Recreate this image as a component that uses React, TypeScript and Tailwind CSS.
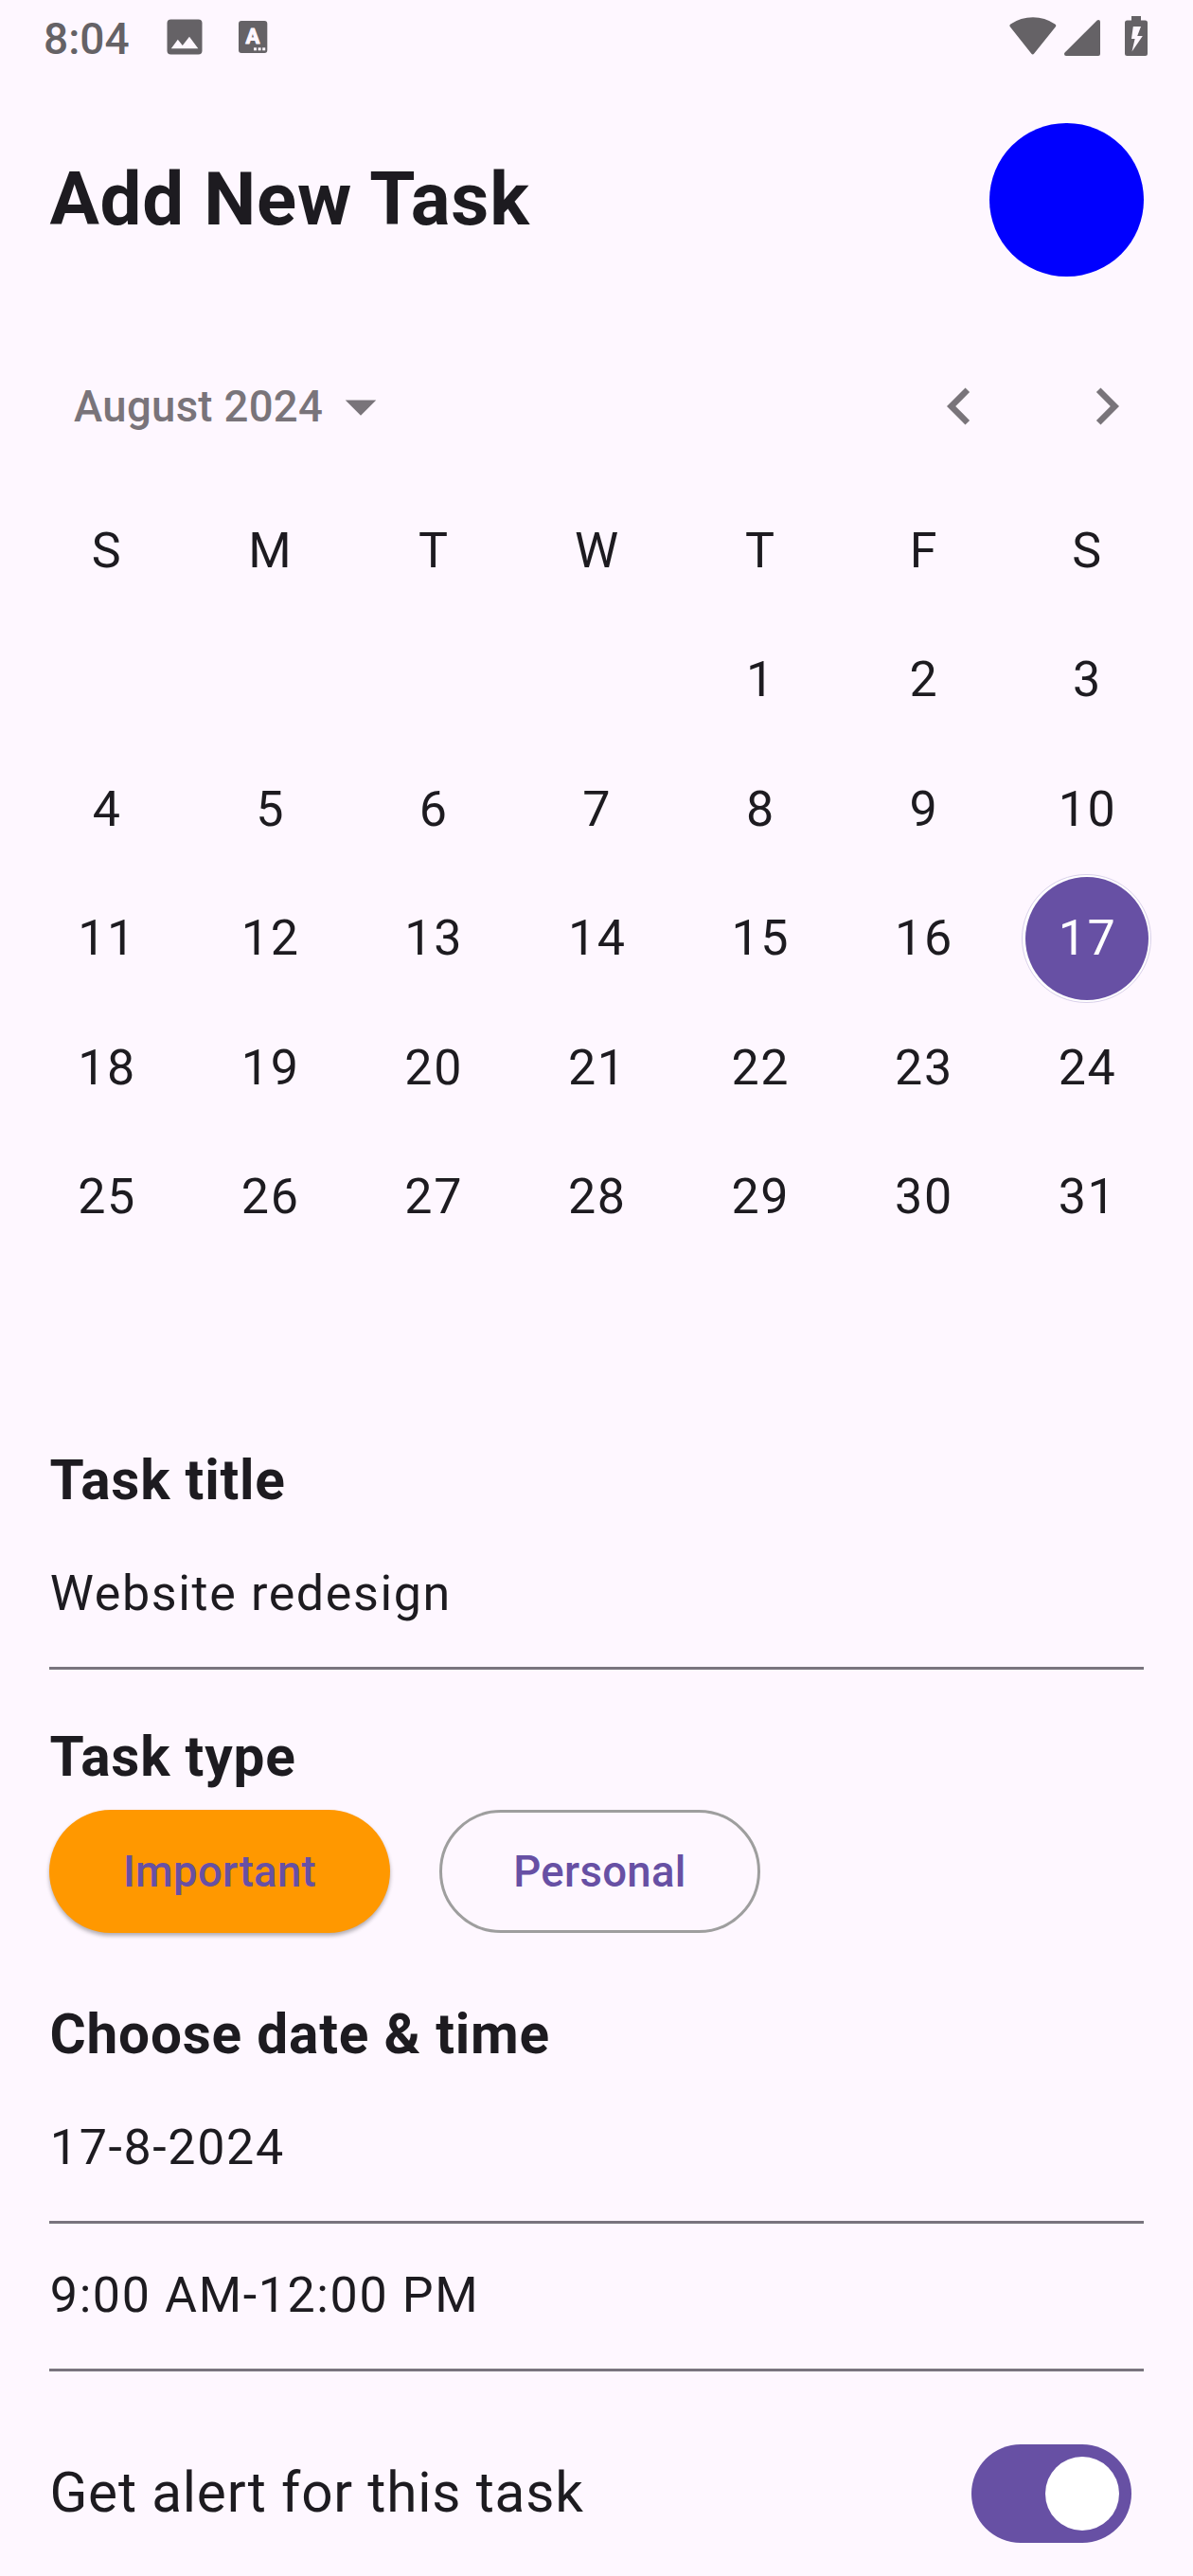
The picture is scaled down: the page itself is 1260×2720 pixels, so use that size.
const weekdays = ['S', 'M', 'T', 'W', 'T', 'F', 'S'];
const leadingBlanks = 4;
const days = Array.from({ length: 31 }, (_, i) => i + 1);
const selectedDay = 17;

function StatusBar() {
  return (
    <div className="flex h-[78px] items-start justify-between pl-[46px] pr-[47px] text-[#656266]">
      <div className="flex items-start">
        <span className="mt-[14px] w-[130px] text-[46px] font-medium leading-[54px]">8:04</span>
        <svg className="mt-5 h-[38px] w-[38px]" viewBox="0 0 38 38">
          <rect x="0.5" y="0.5" width="37" height="37" rx="4" fill="currentColor" />
          <path d="M4.8 31.2L11.8 21.8L16.8 28L24 18.8L33.3 31.2Z" fill="#fef7ff" />
        </svg>
        <svg className="ml-[37px] mt-5 h-[38px] w-[34px]" viewBox="0 0 34 38">
          <rect x="1" y="2" width="30.3" height="34" rx="3" fill="currentColor" />
          <text x="16" y="26.2" textAnchor="middle" fontSize="22" fontWeight="700" fill="#fef7ff" stroke="#fef7ff" strokeWidth="1" strokeLinejoin="round">A</text>
          <rect x="17" y="30.3" width="3" height="3" fill="#fef7ff" />
          <rect x="21.6" y="30.3" width="3" height="3" fill="#fef7ff" />
          <rect x="26.2" y="30.3" width="3" height="3" fill="#fef7ff" />
        </svg>
      </div>
      <div className="flex items-start">
        <svg className="mt-4 h-11 w-[50px]" viewBox="0 0 50 44" fill="currentColor">
          <path d="M1 12.4Q-0.4 10.7 1.3 9.4Q12 2.2 25 2.2Q37.500 2.200 48.300 9.400Q50.100 10.700 48.700 12.400L26.200 40.600Q24.700 42.400 23.200 40.600Z" />
        </svg>
        <svg className="ml-2 mt-5 h-10 w-[39px]" viewBox="0 0 39 40" fill="currentColor">
          <path d="M38 3V37Q38 39 36 39H2Q0 39 0 37Q0 36.200 0.600 35.600L34.700 1.500Q35.300 1 36.200 1Q38 1 38 3Z" />
        </svg>
        <svg className="ml-[25px] mt-4 h-11 w-[25px]" viewBox="0 0 25 44">
          <path d="M7 1H17V5.500H21.500Q24 5.500 24 8V40.500Q24 43 21.500 43H2.500Q0 43 0 40.500V8Q0 5.500 2.500 5.500H7Z" fill="currentColor" />
          <path d="M8.800 12H17L13.200 22H18.800L7.500 38.500L10.600 25H7Z" fill="#fef7ff" />
        </svg>
      </div>
    </div>
  );
}

function Header() {
  return (
    <header className="mt-[52px] flex h-[162px] items-center justify-between px-[52px]">
      <h1 className="pl-[0.4px] text-[78px] font-bold leading-[92px] tracking-[0.8125px]">Add New Task</h1>
      <div className="h-[162px] w-[163px] rounded-full bg-[#0000ff]" />
    </header>
  );
}

function Calendar() {
  return (
    <section>
      <div className="mt-[52px] flex h-[169px] items-center justify-between pl-[78px] pr-[52.5px] text-[#79747a]">
        <div className="flex items-center">
          <span className="w-[263.5px] whitespace-nowrap pt-px text-[45.5px] font-medium leading-[65px] tracking-[0.325px]">August 2024</span>
          <svg className="h-[78px] w-[78px]" viewBox="0 0 24 24" fill="currentColor">
            <path d="M7 10l5 5 5-5z" />
          </svg>
        </div>
        <div className="flex gap-[78px]">
          <svg className="h-[78px] w-[78px]" viewBox="0 0 24 24" fill="currentColor">
            <path d="M15.41 7.41L14 6l-6 6 6 6 1.41-1.41L10.83 12z" />
          </svg>
          <svg className="h-[78px] w-[78px]" viewBox="0 0 24 24" fill="currentColor">
            <path d="M10 6L8.59 7.41 13.17 12l-4.58 4.590L10 18l6-6z" />
          </svg>
        </div>
      </div>
      <div className="grid h-[955.5px] auto-rows-[136.5px] grid-cols-7 px-[26px] text-[52px] leading-[76px] tracking-[1.625px]">
        {weekdays.map((d, i) => (
          <div key={i} className="flex items-center justify-center pl-[1.6px] pt-px">{d}</div>
        ))}
        {Array.from({ length: leadingBlanks }, (_, i) => (
          <div key={`b${i}`} />
        ))}
        {days.map((d) =>
          d === selectedDay ? (
            <div key={d} className="flex items-center justify-center">
              <div className="flex h-[136.5px] w-[136.5px] items-center justify-center rounded-full border border-[#d9d0ea] bg-white">
                <div className="flex h-[130px] w-[130px] shrink-0 items-center justify-center rounded-full bg-[#6750a4] pl-[1.6px] pt-px text-white">{d}</div>
              </div>
            </div>
          ) : (
            <div key={d} className="flex items-center justify-center pl-[1.6px] pt-px">{d}</div>
          ),
        )}
      </div>
    </section>
  );
}

function Label({ children }: { children: string }) {
  return <h2 className="pl-[0.4px] text-[58.5px] font-bold leading-[84px] tracking-[0.8125px]">{children}</h2>;
}

function Field({ value }: { value: string }) {
  return (
    <div className="flex h-[156px] items-center border-b-[3px] border-[#79747e] pb-px pl-[0.8px] text-[52px] leading-[76px] tracking-[1.625px]">
      {value}
    </div>
  );
}

export default function App() {
  return (
    <main className="flex h-[2720px] w-[1260px] flex-col overflow-hidden bg-[#fef7ff] font-['Roboto',sans-serif] text-[#1d1b20]">
      <StatusBar />
      <Header />
      <Calendar />
      <section className="flex flex-col px-[52px] pt-[52px]">
        <Label>Task title</Label>
        <div className="mt-[2px]">
          <Field value="Website redesign" />
        </div>
        <div className="mt-[50px]">
          <Label>Task type</Label>
        </div>
        <div className="mt-[14px] flex gap-[52px] text-[45.5px] font-medium leading-[65px] tracking-[0.325px] text-[#6750a4]">
          <button className="flex h-[130px] w-[360px] items-center justify-center rounded-full bg-[#ff9800] pt-px shadow-[0_3px_4px_rgba(0,0,0,0.3)]">
            Important
          </button>
          <button className="flex h-[130px] w-[339px] items-center justify-center rounded-full border-[3px] border-[#9e9e9e] pt-px">
            Personal
          </button>
        </div>
        <div className="mt-[65px]">
          <Label>Choose date &amp; time</Label>
        </div>
        <div className="mt-[2px]">
          <Field value="17-8-2024" />
          <Field value="9:00 AM-12:00 PM" />
        </div>
        <div className="mt-[77px] flex h-[104px] items-center justify-between pr-[13px]">
          <span className="pb-[2px] pl-[0.4px] text-[58.5px] leading-[84px] tracking-[0.8125px]">Get alert for this task</span>
          <button role="switch" aria-checked="true" aria-label="Get alert for this task" className="flex h-[104px] w-[169px] items-center justify-end rounded-full bg-[#6750a4] pr-[13px]">
            <span className="h-[78px] w-[78px] rounded-full bg-white" />
          </button>
        </div>
      </section>
    </main>
  );
}
